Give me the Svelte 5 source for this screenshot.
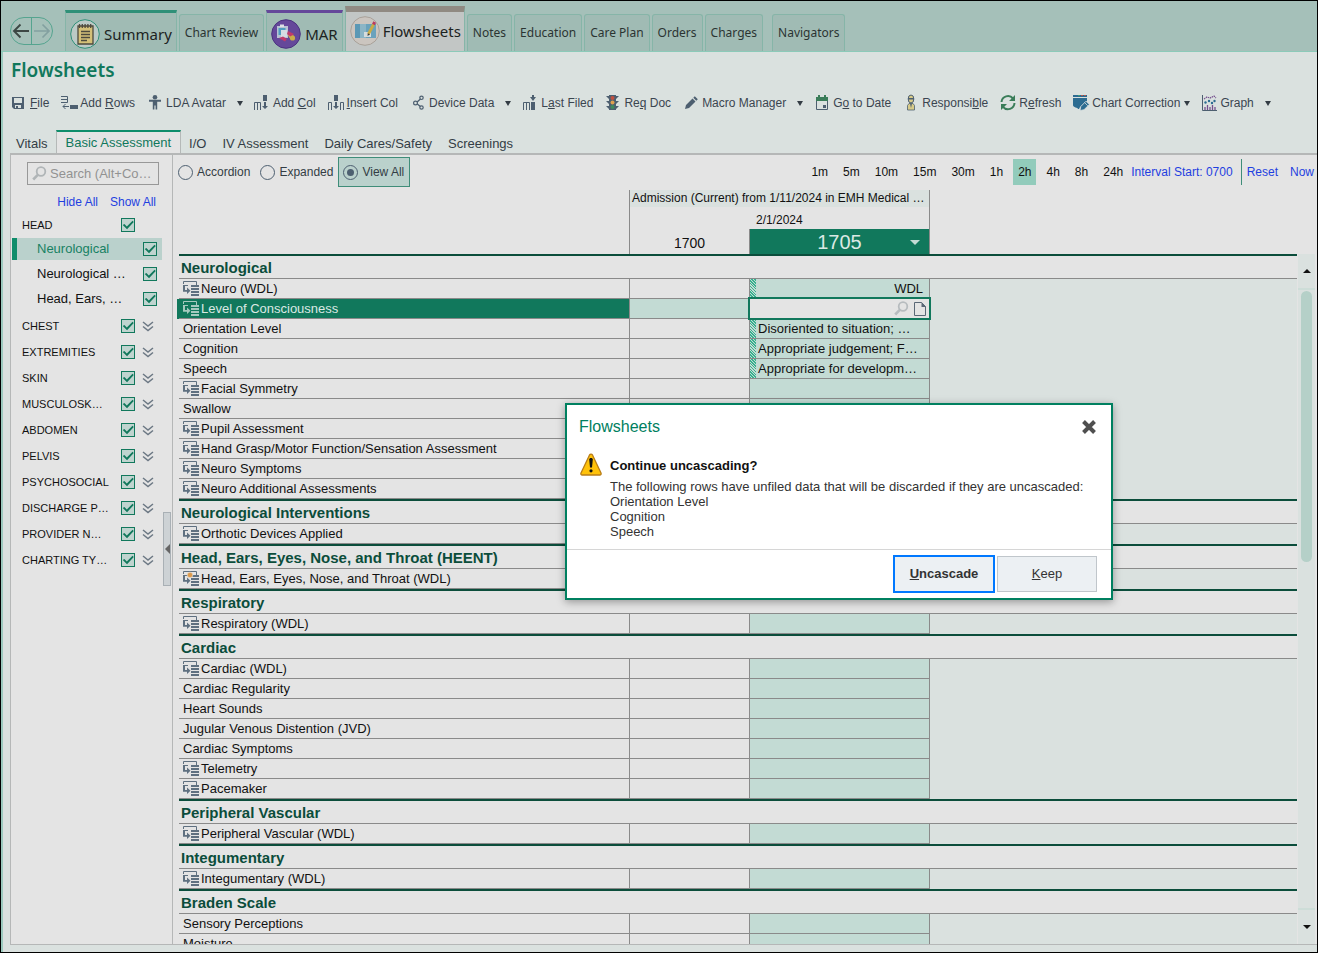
<script>
  const shortTabs = ['Notes', 'Education', 'Care Plan', 'Orders', 'Charges'];

  const tools = [
    { label: '&File', icon: 'file' },
    { label: 'Add &Rows', icon: 'rows' },
    { label: 'LDA Avatar', icon: 'avatar', menu: true },
    { label: 'Add &Col', icon: 'col' },
    { label: '&Insert Col', icon: 'insert' },
    { label: 'Device Data', icon: 'device', menu: true },
    { label: 'L&ast Filed', icon: 'filed' },
    { label: 'Re&q Doc', icon: 'light' },
    { label: 'Macro Manager', icon: 'pencil', menu: true },
    { label: 'G&o to Date', icon: 'date' },
    { label: 'Responsi&ble', icon: 'person' },
    { label: 'R&efresh', icon: 'refresh' },
    { label: 'Chart Correction', icon: 'correction', menu: true, tight: true },
    { label: 'Graph', icon: 'graph', menu: true }
  ];

  function parts(label) {
    const i = label.indexOf('&');
    return i < 0 ? [label, '', ''] : [label.slice(0, i), label[i + 1], label.slice(i + 2)];
  }

  const sheets = ['Vitals', 'Basic Assessment', 'I/O', 'IV Assessment', 'Daily Cares/Safety', 'Screenings'];

  const headItems = ['Neurological', 'Neurological …', 'Head, Ears, …'];
  const groups = ['CHEST', 'EXTREMITIES', 'SKIN', 'MUSCULOSK…', 'ABDOMEN', 'PELVIS', 'PSYCHOSOCIAL', 'DISCHARGE P…', 'PROVIDER N…', 'CHARTING TY…'];

  const views = ['Accordion', 'Expanded', 'View All'];
  let view = $state('View All');

  const intervals = ['1m', '5m', '10m', '15m', '30m', '1h', '2h', '4h', '8h', '24h'];
  let interval = $state('2h');

  const c = (name, extra = {}) => ({ name, cascade: true, ...extra });
  const r = (name, extra = {}) => ({ name, ...extra });
  const sections = [
    { title: 'Neurological', rows: [
      c('Neuro (WDL)', { value: 'WDL', right: true }),
      c('Level of Consciousness', { selected: true }),
      r('Orientation Level', { value: 'Disoriented to situation; …' }),
      r('Cognition', { value: 'Appropriate judgement; F…' }),
      r('Speech', { value: 'Appropriate for developm…' }),
      c('Facial Symmetry'), r('Swallow'), c('Pupil Assessment'),
      c('Hand Grasp/Motor Function/Sensation Assessment'),
      c('Neuro Symptoms'), c('Neuro Additional Assessments')
    ] },
    { title: 'Neurological Interventions', rows: [c('Orthotic Devices Applied')] },
    { title: 'Head, Ears, Eyes, Nose, and Throat (HEENT)', rows: [c('Head, Ears, Eyes, Nose, and Throat (WDL)', { spark: true })] },
    { title: 'Respiratory', rows: [c('Respiratory (WDL)')] },
    { title: 'Cardiac', rows: [c('Cardiac (WDL)'), r('Cardiac Regularity'), r('Heart Sounds'), r('Jugular Venous Distention (JVD)'), r('Cardiac Symptoms'), c('Telemetry'), c('Pacemaker')] },
    { title: 'Peripheral Vascular', rows: [c('Peripheral Vascular (WDL)')] },
    { title: 'Integumentary', rows: [c('Integumentary (WDL)')] },
    { title: 'Braden Scale', rows: [r('Sensory Perceptions'), r('Moisture')] }
  ];
</script>

{#snippet toolIcon(name)}
  <svg class="ticon" width="18" height="18" viewBox="0 0 18 18" aria-hidden="true">
    {#if name === 'file'}
      <path fill="#4d5f70" fill-rule="evenodd" d="M1 3h12v12H3l-2-2zM3 4v5h8V4zM4 11v3h1v-2h2v2h3v-3z" />
    {:else if name === 'rows'}
      <path fill="none" stroke="#4d5f70" d="M0 2.500h6.500v6H0M0 5.500h6M2 12.500h6M4.500 10L2 12.500 4.500 15" />
      <path fill="#4d5f70" d="M9 11h8v4H9z" />
    {:else if name === 'avatar'}
      <circle cx="8" cy="3.300" r="2.300" fill="#4d5f70" />
      <path fill="#4d5f70" d="M2 5.800h12v2h-3.800v7.700H8.600v-4H7.400v4H5.800V7.800H2z" />
    {:else if name === 'col'}
      <path fill="none" stroke="#4d5f70" d="M.500 16V8.500h6V16M3.500 8.500V16" />
      <path fill="#4d5f70" d="M9 1h4v6H9zM10 8h2v4h2l-3 3-3-3h2z" />
    {:else if name === 'insert'}
      <path fill="none" stroke="#4d5f70" d="M.500 16V8.500h3V16M12.500 16V8.500h3V16" />
      <path fill="#4d5f70" d="M6 1h4v6H6zM7 8h2v4h2l-3 3-3-3h2z" />
    {:else if name === 'device'}
      <path fill="none" stroke="#4d5f70" stroke-width="1.300" d="M11 4.500L6 9l5 4" />
      <g fill="#dae1df" stroke="#4d5f70" stroke-width="1.200"><circle cx="11.500" cy="3.800" r="1.700" /><circle cx="5.500" cy="9" r="1.900" /><circle cx="11.500" cy="13.500" r="1.700" /></g>
    {:else if name === 'filed'}
      <path fill="none" stroke="#4d5f70" d="M1.500 16V8.500h6V16M4.500 8.500V16" />
      <path fill="#4d5f70" d="M9 8h4v8H9zM10 1h2v2h2l-3 4-3-4h2z" />
    {:else if name === 'light'}
      <path fill="#4d5f70" d="M4 1h7v15H4zM1 2h3v3zM1 7h3v3zM1 12h3v3zM14 2h-3v3zM14 7h-3v3zM14 12h-3v3z" />
      <circle cx="7.500" cy="4" r="2" fill="#c2503f" /><circle cx="7.500" cy="8.500" r="2" fill="#dfa04f" /><circle cx="7.500" cy="13" r="2" fill="#3f8a5f" />
    {:else if name === 'pencil'}
      <path fill="#4d5f70" d="M2 15l1-4 6.500-6.500 3 3L6 14zM10.300 3.700l1.500-1.500 3 3-1.500 1.500z" />
    {:else if name === 'date'}
      <path fill="none" stroke="#4d5f70" d="M2.500 5v10.500h11V5" />
      <path fill="#3a7d59" d="M2 3h2V1h2v2h4V1h2v2h2v4H2z" /><path fill="#4d5f70" d="M9 11h3v3H9z" />
    {:else if name === 'person'}
      <path fill="#d8cb88" stroke="#4d5f70" stroke-width=".8" d="M4.500 16v-4.500L6 9.500h4l1.500 2V16z" />
      <ellipse cx="8" cy="5" rx="2.800" ry="4" fill="#d8cb88" stroke="#4d5f70" />
      <path fill="#4d5f70" d="M5 4h6v1.500H5zM7 9.500h2L8 14z" />
    {:else if name === 'refresh'}
      <path fill="none" stroke="#3a7d59" stroke-width="2" d="M1.500 8A6.500 6.500 0 0 1 13 4.500M14.500 9A6.500 6.500 0 0 1 3 12.800" />
      <path fill="#3a7d59" d="M15 1v6H9zM1 16v-6h6z" />
    {:else if name === 'correction'}
      <path fill="#2c6c91" d="M0 1h14v2H0zM0 4h14v3l-7 6-1 2H5c0-2-5-1-5-4z" />
      <path fill="#b35a50" d="M8 1h2v1H8zM11 1h2v1h-2z" /><path fill="#3a9a75" d="M5 1h2v1H5z" />
      <path fill="#2c6c91" stroke="#dae1df" stroke-width=".8" d="M7 16.500l.8-4L13 7.200l3.300 3.300-5.300 5.200z" />
      <path stroke="#dae1df" fill="none" stroke-width=".8" d="M11.500 8.500l3.300 3.300" />
    {:else}
      <path fill="none" stroke="#4d5f70" d="M1.500 1v15.500H16" />
      <path fill="none" stroke="#75518e" stroke-width="1.200" stroke-dasharray="1.500 .7" d="M3 5l3-2 3 1 4-2 2 2" />
      <path stroke="#75518e" stroke-width="1.300" d="M4 16v-3M6.500 16v-5M9 16v-3M11.500 16v-5M14 16v-3" />
      <g fill="#2c6c91"><circle cx="4.500" cy="8.500" r="1.200" /><circle cx="8" cy="7" r="1.200" /><circle cx="11" cy="9" r="1.200" /><circle cx="13.500" cy="7" r="1.200" /></g>
    {/if}
  </svg>
{/snippet}

{#snippet magnifier(color)}
  <svg width="15" height="15" viewBox="0 0 15 15" aria-hidden="true">
    <circle cx="9" cy="5.500" r="4.300" fill="none" stroke={color} stroke-width="1.800" />
    <path d="M5.800 8.800L1.200 13.500" stroke={color} stroke-width="2.600" />
  </svg>
{/snippet}

<div class="app">
  <header class="tabbar">
    <nav class="history" aria-label="History">
      <button aria-label="Back"><svg width="20" height="18" viewBox="0 0 20 18"><path d="M18 9H3M9.500 2.500L3 9l6.500 6.500" fill="none" stroke="#3c4744" stroke-width="1.900" /></svg></button>
      <button aria-label="Forward"><svg width="20" height="18" viewBox="0 0 20 18"><path d="M2 9h15M10.500 2.500L17 9l-6.500 6.500" fill="none" stroke="#83a0a0" stroke-width="1.700" /></svg></button>
    </nav>
    <button class="tab big summary">
      <svg width="30" height="30" viewBox="0 0 30 30" aria-hidden="true">
        <circle cx="15" cy="15" r="14.300" fill="#bccac6" stroke="#2f9078" />
        <path d="M8 7h15v18H8z" fill="#d4c078" stroke="#4d4a3e" stroke-width="1.300" />
        <path d="M11 12.500h9M11 15.500h9M11 18.500h9M11 21.500h6" stroke="#4d4a3e" stroke-width="1.300" />
        <path d="M9.500 5v4M12.300 5v4M15.100 5v4M17.900 5v4M20.700 5v4" stroke="#4d4a3e" stroke-width="1.300" />
      </svg>
      Summary
    </button>
    <button class="tab small">Chart Review</button>
    <button class="tab big mar">
      <svg width="30" height="30" viewBox="0 0 30 30" aria-hidden="true">
        <circle cx="15" cy="15" r="14.300" fill="#65489a" stroke="#4b3380" />
        <path d="M6 7h11v12H6z" fill="#b9c3d4" /><path d="M7.500 9h7v7h-7z" fill="#4f9dc0" /><path d="M9 5.500h4v2.500H9z" fill="#dde1e5" />
        <path d="M10 11h6v7h-6z" fill="#d5dbe2" />
        <path d="M8 19l4-1.500 4 2.500-2 2.500z" fill="#c03a6b" /><path d="M16.500 15.500a5 5 0 0 1 7 2.500l-5 1z" fill="#c9ad4b" /><path d="M17 12l6 3-3 3-4-3z" fill="#c03a6b" /><circle cx="21.500" cy="19" r="2.600" fill="#c9ad4b" />
      </svg>
      MAR
    </button>
    <button class="tab big flow" aria-current="page">
      <svg width="30" height="30" viewBox="0 0 30 30" aria-hidden="true">
        <circle cx="15" cy="15" r="14.300" fill="#cbc5bf" stroke="#a9a199" />
        <path d="M5 8h5v14H5z" fill="#5b98b5" /><path d="M10 8h6v14h-6z" fill="#8bb5c6" /><path d="M16 8h10v14H16z" fill="#6aa2bc" />
        <path d="M14 16h7v5h-7z" fill="#d6dcdd" />
        <path d="M18.500 18L24 7.500" stroke="#c9ab45" stroke-width="2.800" /><path d="M17.500 20l.3-2.800 2.200 1.200z" fill="#3c3c3c" />
        <path d="M23.500 8.500l1.200-2.500" stroke="#b93a63" stroke-width="3" />
      </svg>
      Flowsheets
    </button>
    {#each shortTabs as t}<button class="tab small">{t}</button>{/each}
    <button class="tab small apart">Navigators</button>
  </header>

  <main>
    <h1>Flowsheets</h1>
    <div class="toolbar" role="toolbar" aria-label="Flowsheet actions">
      {#each tools as t}
        {@const p = parts(t.label)}
        <button class="tool">
          {@render toolIcon(t.icon)}<span>{p[0]}<u>{p[1]}</u>{p[2]}</span>
          {#if t.menu}<i class="caret" class:tight={t.tight}></i>{/if}
        </button>
      {/each}
    </div>

    <nav class="sheets" aria-label="Flowsheet templates">
      {#each sheets as s}<button class:active={s === 'Basic Assessment'}>{s}</button>{/each}
    </nav>

    <div class="panel">
      <aside>
        <div class="search">
          {@render magnifier('#b0b5b7')}
          <input type="text" placeholder="Search (Alt+Co…" aria-label="Search" />
        </div>
        <div class="links"><a href="#hide">Hide All</a><a href="#show">Show All</a></div>
        <label class="group"><span>HEAD</span><input type="checkbox" checked /></label>
        {#each headItems as item, i}
          <label class="item" class:current={i === 0}><span>{item}</span><input type="checkbox" checked /></label>
        {/each}
        {#each groups as g}
          <div class="row">
            <label class="group"><span>{g}</span><input type="checkbox" checked /></label>
            <button aria-label={`Expand ${g}`}><svg width="12" height="11" viewBox="0 0 12 11"><path d="M1 1l5 4 5-4M1 5.500l5 4 5-4" fill="none" stroke="#6c7884" stroke-width="1.500" /></svg></button>
          </div>
        {/each}
        <button class="collapse" aria-label="Collapse sidebar"></button>
      </aside>

      <section class="sheet">
        <div class="controls">
          {#each views as v}
            <label class="view" class:on={view === v}><input type="radio" name="view" value={v} bind:group={view} />{v}</label>
          {/each}
          <div class="intervals">
            {#each intervals as n}<button class:on={interval === n} onclick={() => (interval = n)}>{n}</button>{/each}
            <a class="start" href="#start">Interval Start: 0700</a>
            <a class="reset" href="#reset">Reset</a>
            <a href="#now">Now</a>
          </div>
        </div>

        <div class="gridwrap">
          <div class="scroller">
            <table>
              <colgroup><col class="cname" /><col class="cold" /><col class="cnew" /><col /></colgroup>
              <thead>
                <tr class="enc"><td></td><th colspan="2">Admission (Current) from 1/11/2024 in EMH Medical …</th><td></td></tr>
                <tr class="date"><td></td><td></td><th>2/1/2024</th><td></td></tr>
                <tr class="time"><td></td><th class="edge">1700</th><th class="now"><span>1705</span><i></i></th><td></td></tr>
              </thead>
              {#each sections as s}
                <tbody>
                  <tr class="title"><th colspan="4">{s.title}</th></tr>
                  {#each s.rows as row}
                    <tr class:selected={row.selected}>
                      <th class="name" scope="row">
                        <div>
                          {#if row.cascade}
                            <svg width="16" height="16" viewBox="0 0 16 16" aria-hidden="true">
                              <path d="M.500 3V.500H13.500V4" fill="none" stroke="currentColor" />
                              <path d="M0 4h5v1H2v4h2V6.500L7.500 9.700 4 13v-2.300H0z" fill="currentColor" />
                              <path d="M8 4h8v2H8zM8 7h8v2H8zM8 10h8v2H8zM8 13h8v2H8z" fill="currentColor" />
                              {#if row.spark}<circle cx="7" cy="4" r="2.800" fill="#dc9a4c" stroke="#e4e4e4" stroke-width=".6" />{/if}
                            </svg>
                          {/if}
                          <span>{row.name}</span>
                        </div>
                      </th>
                      <td class="old"></td>
                      <td class="new">
                        {#if row.selected}
                          <div class="entry">
                            <input type="text" aria-label={row.name} />
                            {@render magnifier('#b7bcbf')}
                            <svg width="12" height="14" viewBox="0 0 12 14" aria-hidden="true"><path d="M.500.500H7.500L11.500 4.500V13.500H.500z" fill="none" stroke="#5a6876" /><path d="M7.500 0v5H12z" fill="#5a6876" /></svg>
                          </div>
                        {:else if row.value}
                          <div class="value" class:right={row.right}>{row.value}</div>
                        {/if}
                      </td>
                      <td class="rest"></td>
                    </tr>
                  {/each}
                </tbody>
              {/each}
            </table>
          </div>
          <div class="scrollbar">
            <button class="up" aria-label="Scroll up"></button>
            <div class="track"><div class="thumb"></div></div>
            <button class="down" aria-label="Scroll down"></button>
          </div>
        </div>
      </section>
    </div>
  </main>

  <div class="dialog" role="dialog" aria-labelledby="dlg-title">
    <div class="dhead">
      <h2 id="dlg-title">Flowsheets</h2>
      <button aria-label="Close"><svg width="14" height="14" viewBox="0 0 14 14"><path d="M1.500 1.500l11 11M12.500 1.500l-11 11" stroke="#4f4f4f" stroke-width="4" /></svg></button>
    </div>
    <div class="dbody">
      <svg width="22" height="23" viewBox="0 0 22 23" aria-hidden="true">
        <path d="M11 1.200c.8 0 1.300.5 1.600 1L21 20c.4 1-.1 2-1.200 2H2.200C1.100 22 .6 21 1 20L9.400 2.200c.3-.5.8-1 1.600-1z" fill="#ffc20a" stroke="#b97d17" stroke-width="1.300" />
        <path d="M9.200 6.500c0-2 3.600-2 3.600 0L12 14.500h-2z" fill="#111" /><circle cx="11" cy="17.800" r="1.600" fill="#111" />
      </svg>
      <div>
        <strong>Continue uncascading?</strong>
        <p>The following rows have unfiled data that will be discarded if they are uncascaded:<br />Orientation Level<br />Cognition<br />Speech</p>
      </div>
    </div>
    <div class="dfoot">
      <button class="primary"><u>U</u>ncascade</button>
      <button><u>K</u>eep</button>
    </div>
  </div>
</div>

<style>
  :global(body) { margin: 0; }
  .app, .app :global(*) { box-sizing: border-box; }
  .app {
    position: relative; display: flex; flex-direction: column; height: 100vh; overflow: hidden;
    border: 1px solid #000; background: #dae1df; color: #111;
    font: 13px/16px "Liberation Sans", Arial, sans-serif;
  }
  button { font: inherit; color: inherit; background: none; border: 0; padding: 0; margin: 0; }
  input { font: inherit; margin: 0; }
  svg { display: block; flex: none; }
  a { color: #1f3fe0; text-decoration: none; }

  .tabbar { flex: none; display: flex; align-items: flex-end; gap: 2px; height: 51px; padding-left: 9px; background: #a5c0b9; border-bottom: 1px solid #8ccab9; font-family: "Noto Sans", sans-serif; }
  .history { align-self: center; display: flex; width: 43px; height: 28px; margin: 10px 10px 0 0; border: 1px solid #55a48f; border-radius: 14px; overflow: hidden; }
  .history button { flex: 1; display: flex; align-items: center; justify-content: center; }
  .history button + button { border-left: 1px solid #55a48f; }
  .tab { white-space: nowrap; color: #2b3432; background: #a0bbb4; border: 1px solid #86b5a8; border-bottom: 0; }
  .small { height: 37px; padding: 0 5px; border-radius: 3px 3px 0 0; font-size: 12px; }
  .big { display: flex; align-items: center; gap: 4px; height: 41px; padding: 3px 4px 0; font-size: 15px; color: #1c2322; }
  .summary { border-top: 3px solid #2f9078; }
  .mar { border-top: 3px solid #65489a; }
  .flow { gap: 3px; height: 45px; padding: 0 3px 1px 4px; background: #c2c6c5; border-top: 6px solid #908a82; }
  .apart { margin-left: 7px; }

  main { flex: 1; min-height: 0; display: flex; flex-direction: column; padding: 0 0 7px 8px; border-left: 2px solid #9ccbbf; }
  h1 { margin: 6px 0 0; color: #11785c; font: 600 19px/24px "Noto Sans", sans-serif; }
  .toolbar { display: flex; gap: 12px; margin-top: 11px; height: 20px; font-size: 12px; color: #3a4550; }
  .tool { display: flex; align-items: center; white-space: nowrap; }
  .ticon { margin-right: 1px; }
  .caret { margin: 0 -1px 0 11px; border: 3px solid transparent; border-top: 5px solid #333c44; border-bottom: 0; }
  .caret.tight { margin-left: 4px; }

  .sheets { display: flex; align-items: flex-end; height: 25px; margin-top: 15px; color: #333d45; }
  .sheets button { height: 20px; padding: 0 7px; border: 1px solid transparent; border-bottom: 0; }
  .sheets button:first-child { padding: 0 7px 0 4px; }
  .sheets .active { height: 24px; padding: 0 9px; color: #11785c; background: #e4e4e4; border-color: #b5b9b8; border-top: 2px solid #0f8d6b; margin-bottom: -1px; }

  .panel { flex: 1; min-height: 0; display: flex; margin-left: -1px; background: #e4e4e4; border: 1px solid #b5b7b7; border-right: 0; border-top-width: 2px; }
  aside { position: relative; flex: none; width: 162px; padding: 7px 10px 0 0; border-right: 1px solid #b5b7b7; }
  .search { display: flex; align-items: center; gap: 3px; height: 23px; margin: 0 3px 0 16px; padding: 0 4px; border: 1px solid #989898; }
  .search input { flex: 1; min-width: 0; height: 20px; padding: 0; border: 0; background: none; }
  .search input::placeholder { color: #929292; opacity: 1; }
  .links { display: flex; justify-content: flex-end; gap: 12px; margin: 9px 6px 0 0; font-size: 12px; }
  .group, .item { display: flex; align-items: center; justify-content: space-between; }
  .group { flex: none; width: 124px; height: 26px; padding-left: 11px; font-size: 11px; margin-top: 2px; }
  .item { height: 22px; margin: 0 0 3px 1px; padding: 0 5px 0 20px; border-left: 5px solid transparent; }
  .item.current { color: #188163; background: #bad1cc; border-left-color: #0f8d6b; }
  .row { display: flex; align-items: center; gap: 7px; height: 26px; }
  .row .group { margin: 0; }
  input[type='checkbox'] { appearance: none; flex: none; width: 14px; height: 14px; border: 1px solid #11785c; background: #bfd4cf; display: grid; }
  input[type='checkbox']:checked::before { content: ''; margin: 1px 0; background: #11785c; clip-path: polygon(6% 50%, 20% 40%, 40% 66%, 88% 8%, 98% 20%, 42% 92%); }
  .collapse { position: absolute; right: 1px; top: 357px; width: 8px; height: 74px; border: 1px solid #a9b0b5; background: #cdd2d5; }
  .collapse::before { content: ''; display: block; border: 5px solid transparent; border-right-color: #666; border-left: 0; }

  .sheet { flex: 1; min-width: 0; display: flex; flex-direction: column; }
  .controls { flex: none; display: flex; align-items: center; height: 30px; margin: 2px 0 3px 5px; font-size: 12px; }
  .view { display: flex; align-items: center; gap: 4px; height: 30px; margin-right: 5px; padding-right: 5px; white-space: nowrap; color: #333d45; }
  .view.on { margin-left: -5px; padding: 0 5px 0 4px; border: 1px solid #3f8d79; background: #bad1cc; }
  input[type='radio'] { appearance: none; width: 15px; height: 15px; border: 1px solid #4d5f70; border-radius: 50%; display: grid; place-items: center; }
  input[type='radio']:checked::before { content: ''; width: 7px; height: 7px; border-radius: 50%; background: #4d5f70; }
  .intervals { margin-left: auto; display: flex; align-items: center; gap: 5px; padding-right: 3px; white-space: nowrap; }
  .intervals button { height: 26px; padding: 0 5px; }
  .intervals button.on { background: #92cbbb; }
  .intervals .start { margin-left: -2px; }
  .reset { margin: 0 7px 0 3px; padding: 5px 0 5px 5px; border-left: 1px solid #3f8d79; }

  .gridwrap { flex: 1; min-height: 0; display: flex; padding-left: 4px; }
  .scroller { flex: 1; min-width: 0; overflow: hidden; padding-left: 2px; }
  table { width: 100%; table-layout: fixed; border-collapse: separate; border-spacing: 0; }
  .cname { width: 451px; }
  .cold { width: 120px; }
  .cnew { width: 180px; }
  th, td { padding: 0; height: 20px; font-weight: normal; text-align: left; white-space: nowrap; }
  thead th { border-right: 1px solid #8a8a8a; }
  thead td:first-child { border-right: 1px solid #8a8a8a; }
  .enc th, .enc td { height: 17px; font-size: 12px; line-height: 17px; }
  .enc th { background: #dae1df; padding-left: 2px; overflow: hidden; }
  .date th, .date td { height: 22px; font-size: 12px; padding: 4px 0 0 6px; }
  .time th, .time td { height: 25px; }
  .time th.edge { text-align: center; font-size: 14px; padding-top: 3px; }
  .time th.now { position: relative; background: #11785c; color: #dbe9e4; text-align: center; font-size: 20px; line-height: 24px; }
  .now i { position: absolute; right: 9px; top: 11px; border: 5px solid transparent; border-top-color: #c3dbd4; border-bottom: 0; }
  .title th { height: 25px; padding: 1px 0 0 2px; border-top: 2px solid #0b4d3b; border-bottom: 1px solid #8a8a8a; color: #0b4d3b; font-size: 15px; font-weight: bold; }
  .name, .old, .new { border-right: 1px solid #8a8a8a; border-bottom: 1px solid #8a8a8a; }
  .name div { display: flex; align-items: center; gap: 2px; height: 19px; padding-left: 4px; }
  .name svg { color: #5f7080; }
  .new { background: #c3dbd4; }
  .rest { background: #dae1df; }
  .selected .name { background: #11785c; color: #dbe9e4; box-shadow: -2px 0 #11785c; }
  .selected .name svg { color: #a5cabf; }
  .selected .old { background: #c3dbd4; }
  .value { height: 19px; line-height: 19px; padding: 0 6px 0 2px; border-left: 6px solid transparent; background: repeating-linear-gradient(45deg, #35b08e 0 1px, #c3dbd4 1px 2px) border-box 0 0 / 6px 100% no-repeat; }
  .value.right { text-align: right; }
  .entry { display: flex; align-items: center; gap: 5px; height: 19px; padding-right: 3px; background: #e4e4e4; outline: 2px solid #11785c; position: relative; }
  .entry input { flex: 1; min-width: 0; height: 17px; border: 0; padding: 0 4px; background: none; }

  .scrollbar { flex: none; width: 17px; margin: 64px 2px 0 1px; display: flex; flex-direction: column; background: #dae1df; }
  .scrollbar button { flex: none; height: 34px; display: grid; place-items: center; }
  .scrollbar .up::before { content: ''; border: 4px solid transparent; border-bottom: 4px solid #111; border-top: 0; }
  .scrollbar .down::before { content: ''; border: 4px solid transparent; border-top: 4px solid #111; border-bottom: 0; }
  .track { flex: 1; padding: 1px 3px; border: solid #cdddd8; border-width: 2px 0; }
  .thumb { height: 44%; border-radius: 6px; background: #b5d0c8; }

  .dialog { position: absolute; left: 564px; top: 402px; width: 548px; background: #fff; border: 2px solid #008060; box-shadow: 0 2px 8px rgba(0, 0, 0, .35); color: #333; }
  .dhead { display: flex; justify-content: space-between; align-items: center; height: 43px; padding: 0 15px 0 12px; }
  h2 { margin: 0; font-size: 16px; font-weight: normal; line-height: 20px; color: #008060; }
  .dbody { display: flex; gap: 8px; padding: 5px 13px 10px; white-space: nowrap; }
  .dbody strong { display: block; margin-top: 5px; color: #111; }
  .dbody p { margin: 5px 0 0; line-height: 15px; }
  .dfoot { display: flex; justify-content: flex-end; align-items: center; gap: 2px; height: 49px; padding-right: 14px; border-top: 1px solid #d6d6d6; }
  .dfoot button { width: 100px; height: 36px; border: 1px solid #c0c6cb; background: #ecf0f3; }
  .dfoot .primary { width: 102px; height: 38px; border: 2px solid #0078ff; font-weight: bold; }
</style>
